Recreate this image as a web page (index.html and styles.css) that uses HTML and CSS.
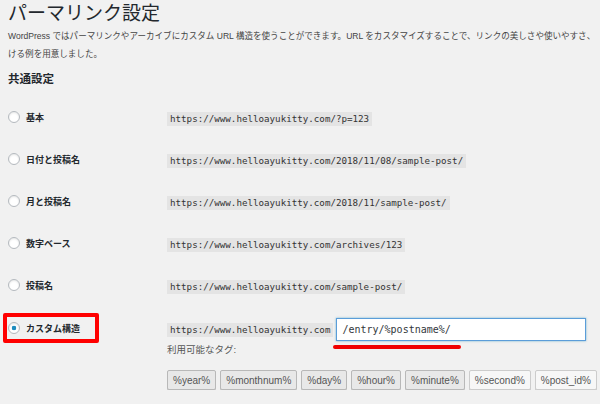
FILE: index.html
```html
<!DOCTYPE html>
<html lang="ja">
<head>
    <meta charset="UTF-8">
    <meta name="viewport" content="width=device-width, initial-scale=1.0">
    <title>パーマリンク設定</title>
    <link rel="stylesheet" href="styles.css">
</head>
<body>
    <div class="wrap">
        <h1>パーマリンク設定</h1>
        <p class="desc">WordPress ではパーマリンクやアーカイブにカスタム URL 構造を使うことができます。URL をカスタマイズすることで、リンクの美しさや使いやすさ、<br>ける例を用意しました。</p>
        <h2>共通設定</h2>

        <div class="options">
            <div class="row">
                <label class="choice"><input type="radio" name="selection"> 基本</label>
                <div><code>https://www.helloayukitty.com/?p=123</code></div>
            </div>
            <div class="row">
                <label class="choice"><input type="radio" name="selection"> 日付と投稿名</label>
                <div><code>https://www.helloayukitty.com/2018/11/08/sample-post/</code></div>
            </div>
            <div class="row">
                <label class="choice"><input type="radio" name="selection"> 月と投稿名</label>
                <div><code>https://www.helloayukitty.com/2018/11/sample-post/</code></div>
            </div>
            <div class="row">
                <label class="choice"><input type="radio" name="selection"> 数字ベース</label>
                <div><code>https://www.helloayukitty.com/archives/123</code></div>
            </div>
            <div class="row">
                <label class="choice"><input type="radio" name="selection"> 投稿名</label>
                <div><code>https://www.helloayukitty.com/sample-post/</code></div>
            </div>
            <div class="row row-custom">
                <label class="choice highlight"><input type="radio" name="selection" checked> カスタム構造</label>
                <div>
                    <div class="custom-line">
                        <code>https://www.helloayukitty.com</code>
                        <input type="text" class="structure" value="/entry/%postname%/">
                        <span class="underline"></span>
                    </div>
                    <p class="tags-title">利用可能なタグ:</p>
                    <div class="tags">
                        <button class="tag used">%year%</button>
                        <button class="tag used">%monthnum%</button>
                        <button class="tag used">%day%</button>
                        <button class="tag used">%hour%</button>
                        <button class="tag used">%minute%</button>
                        <button class="tag">%second%</button>
                        <button class="tag">%post_id%</button>
                    </div>
                </div>
            </div>
        </div>
    </div>
</body>
</html>
```

FILE: styles.css
```css
body {
    margin: 0;
    background-color: #f1f1f1;
    color: #444;
    font-family: "Liberation Sans", "Noto Sans CJK JP", sans-serif;
    overflow: hidden;
}
.wrap {
    padding: 0 8px;
    overflow: hidden;
}
h1 {
    margin: 0;
    padding-top: 1px;
    font-size: 19px;
    line-height: 26px;
    font-weight: 400;
    color: #23282d;
}
.desc {
    margin: 0;
    font-size: 8.55px;
    line-height: 18px;
    white-space: nowrap;
}
h2 {
    margin: 6px 0 0;
    font-size: 11.5px;
    line-height: 20px;
    color: #23282d;
}
.options {
    margin-top: 7px;
}
.row {
    display: grid;
    grid-template-columns: 159px 1fr;
    align-items: center;
    height: 42px;
}
.row-custom {
    align-items: start;
    height: auto;
}
.choice {
    display: flex;
    align-items: center;
    font-size: 9px;
    font-weight: 700;
    color: #23282d;
}
.choice input {
    appearance: none;
    -webkit-appearance: none;
    width: 12px;
    height: 12px;
    margin: 0 6px 0 0;
    border: 1px solid #b4b9be;
    border-radius: 50%;
    background: #fff;
    box-shadow: inset 0 1px 2px rgba(0, 0, 0, 0.1);
    box-sizing: border-box;
}
.choice input:checked {
    background: radial-gradient(circle, #1e8cbe 0 2px, #fff 2.6px);
}
.highlight {
    width: 96px;
    height: 30px;
    margin: 7px 0 0 -5px;
    padding-left: 1px;
    border: 4px solid #ff0000;
    border-radius: 2px;
    box-sizing: border-box;
}
code {
    display: inline-block;
    padding: 0 3px;
    background: #e4e4e4;
    color: #333;
    font-family: "DejaVu Sans Mono", monospace;
    font-size: 9.2px;
    line-height: 14px;
}
.custom-line {
    position: relative;
    display: flex;
    align-items: center;
    margin-top: 12px;
}
.structure {
    width: 250px;
    height: 23px;
    margin: 0 0 0 3px;
    padding: 0 5px;
    border: 1px solid #5b9dd9;
    border-radius: 0;
    box-shadow: 0 0 2px rgba(30, 140, 190, 0.6);
    box-sizing: border-box;
    background: #fff;
    color: #32373c;
    font-family: "DejaVu Sans Mono", monospace;
    font-size: 10px;
    outline: none;
}
.underline {
    position: absolute;
    left: 166px;
    top: 27px;
    width: 128px;
    height: 4px;
    border-radius: 2px;
    background: #f00000;
}
.tags-title {
    margin: 2px 0 0;
    font-size: 9.5px;
    line-height: 14px;
    color: #555;
}
.tags {
    display: flex;
    gap: 4px;
    margin-top: 13px;
}
.tag {
    height: 20px;
    padding: 0 5px;
    border: 1px solid #ccc;
    border-radius: 2px;
    background: #f7f7f7;
    box-shadow: 0 1px 0 #ccc;
    color: #555;
    font-family: "Liberation Sans", sans-serif;
    font-size: 10px;
    cursor: pointer;
}
.tag.used {
    background: #e8e8e8;
    border-color: #b8b8b8;
}
```
